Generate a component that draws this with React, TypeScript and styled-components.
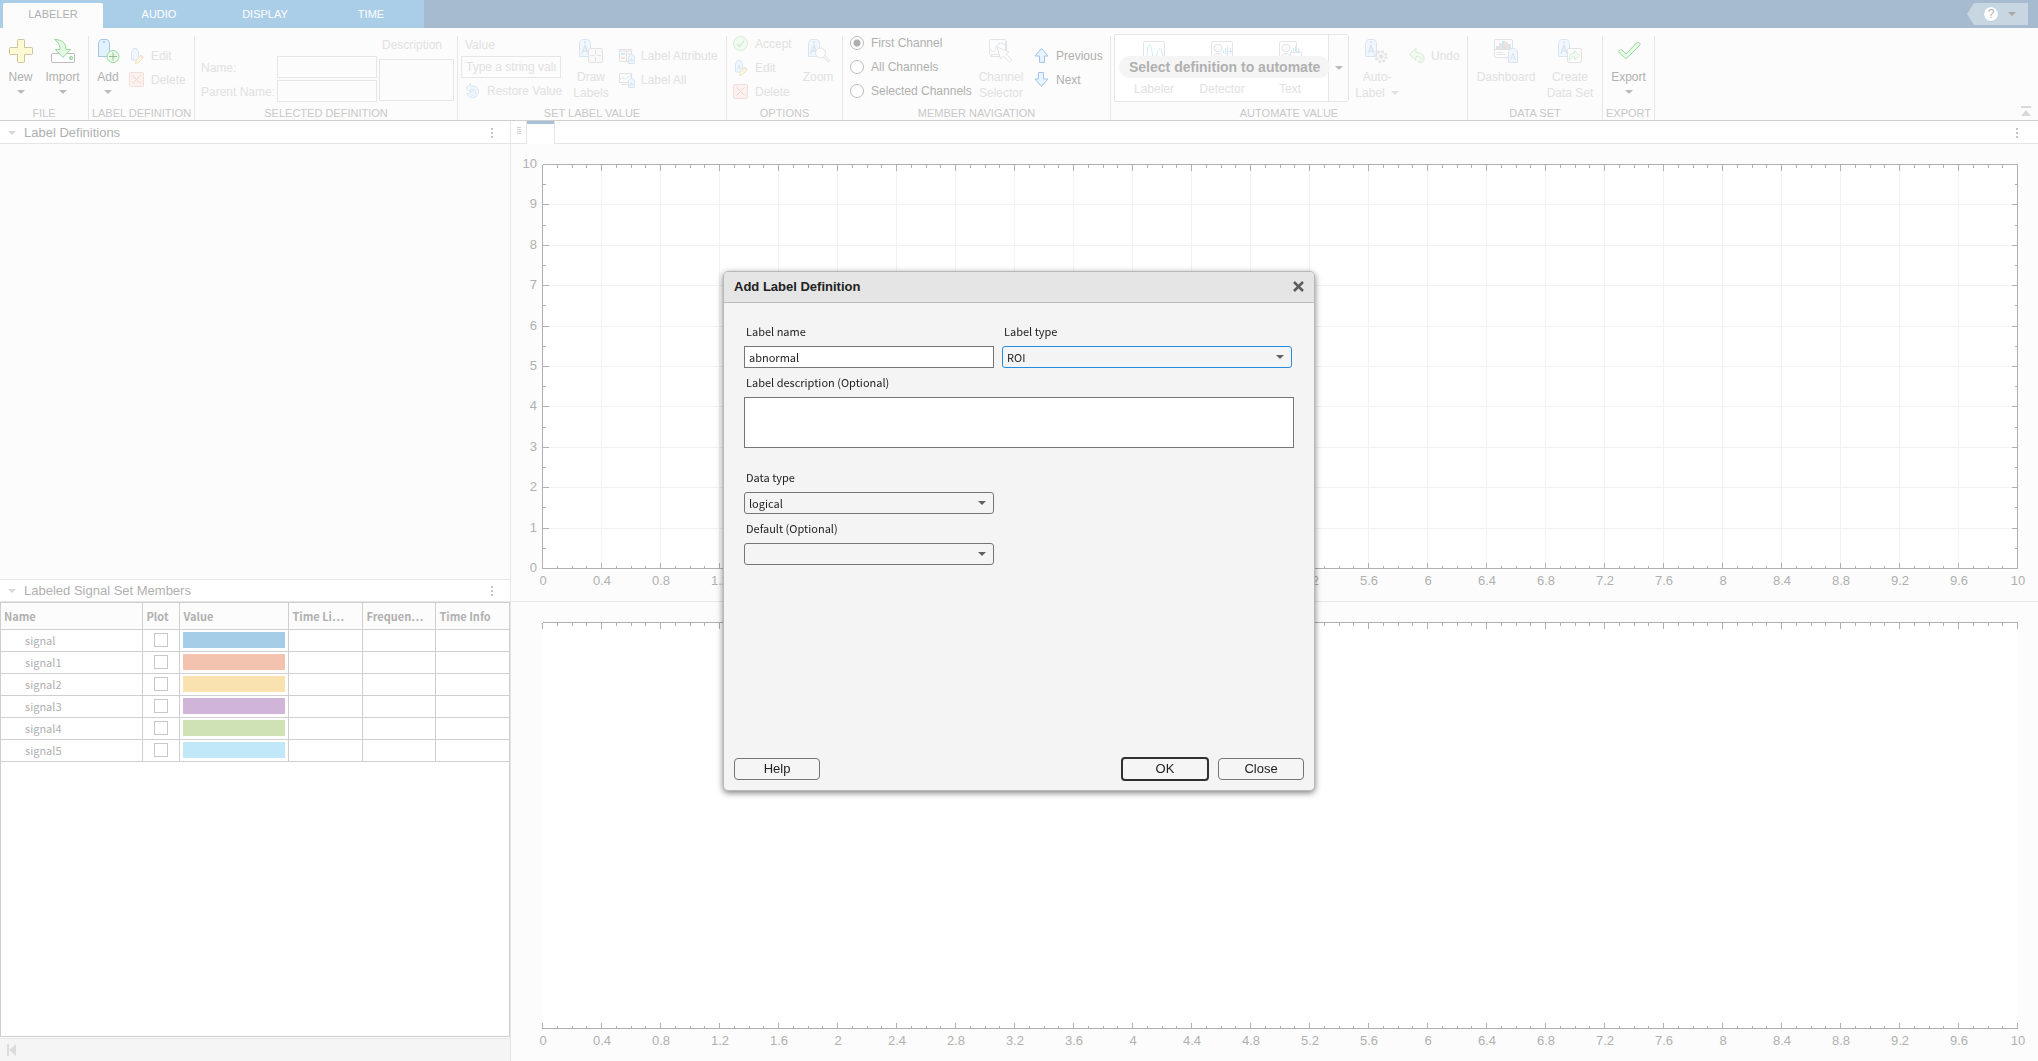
import React from "react";
import styled, { createGlobalStyle, css } from "styled-components";

const sans = `"Liberation Sans", Arial, sans-serif`;
const humanist = `"Noto Sans CJK SC", "Noto Sans", sans-serif`;

const color = {
  strip: "#fcfcfc",
  rule: "#e6e6e6",
  ruleDark: "#cfcfcf",
  text: "#b0b0b0",
  textOff: "#e1e1e1",
  caption: "#c8c8c8",
  axis: "#b0b0b0",
  grid: "#f2f2f2",
};

const GlobalStyle = createGlobalStyle`
  *, *::before, *::after { box-sizing: border-box; }
  body { margin: 0; font: 12px/16px ${sans}; color: ${color.text}; }
  button, input, select, textarea { font: inherit; color: inherit; margin: 0; padding: 0; border-radius: 0; }
  button { background: none; border: 0; }
  svg { display: block; flex: none; }
`;

const Page = styled.div`
  display: flex;
  flex-direction: column;
  height: 100vh;
  min-height: 620px;
  background: ${color.strip};
`;

/* ---------- tab bar ---------- */

const TabBar = styled.header`
  display: flex;
  justify-content: space-between;
  height: 28px;
  flex: none;
  background: #a6bad0;
`;

const TabList = styled.nav`
  display: flex;
  gap: 6px;
  padding: 3px 3px 0;
  background: #aacde8;
`;

const RibbonTab = styled.button<{ $active?: boolean }>`
  width: 100px;
  font-size: 11px;
  border-radius: 2px 2px 0 0;
  padding-bottom: 3px;
  color: ${(p) => (p.$active ? color.text : "#fff")};
  background: ${(p) => (p.$active ? color.strip : "transparent")};
`;

const QuickAccess = styled.div`
  display: flex;
  align-items: center;
  gap: 10px;
  width: 61px;
  height: 22px;
  margin: 3px 10px 0 0;
  padding-left: 17px;
  background: #c8d6e1;
  clip-path: polygon(7px 0, 100% 0, 100% 100%, 7px 100%, 0 50%);
`;

const HelpButton = styled.button`
  width: 14px;
  height: 14px;
  line-height: 14px;
  border-radius: 50%;
  background: #fff;
  box-shadow: 0 0 1px #8fc1ea;
`;

/* ---------- toolstrip ---------- */

const Strip = styled.div`
  display: flex;
  height: 93px;
  flex: none;
  padding-top: 3px;
  background: ${color.strip};
  border-bottom: 1px solid ${color.ruleDark};
`;

const Section = styled.section<{ $width: number }>`
  display: grid;
  grid-template-rows: 72px 17px;
  flex: 0 0 ${(p) => p.$width}px;
`;

const SectionBody = styled.div<{ $inset?: number; $gap?: number }>`
  display: flex;
  padding-left: ${(p) => p.$inset ?? 0}px;
  gap: ${(p) => p.$gap ?? 0}px;
`;

const SectionTitle = styled.h2`
  margin: 0;
  font-size: 11px;
  font-weight: 400;
  line-height: 20px;
  text-align: center;
  color: ${color.caption};
`;

const Divider = styled.div`
  width: 1px;
  flex: none;
  margin-top: 5px;
  background: ${color.rule};
`;

const BigButton = styled.button<{ $width: number }>`
  display: flex;
  flex-direction: column;
  align-items: center;
  width: ${(p) => p.$width}px;
  flex: none;
  height: 72px;
  padding-top: 8px;
  color: ${color.text};
  white-space: nowrap;
  &:disabled { color: ${color.textOff}; }
  > svg:first-child { margin-bottom: 6px; }
  > svg:last-child:not(:first-child) { margin-top: 5px; }
`;

const InlineLabel = styled.span`
  display: flex;
  align-items: center;
  gap: 6px;
`;

const Stack = styled.div<{ $inset?: number; $width?: number; $top?: boolean }>`
  display: flex;
  flex-direction: column;
  justify-content: ${(p) => (p.$top ? "flex-start" : "center")};
  flex: none;
  padding-top: ${(p) => (p.$top ? 12 : 0)}px;
  padding-left: ${(p) => p.$inset ?? 0}px;
  ${(p) => p.$width && css`width: ${p.$width}px;`}
`;

const SmallButton = styled.button`
  display: flex;
  align-items: center;
  gap: 6px;
  height: 24px;
  padding-top: 1px;
  white-space: nowrap;
  color: ${color.text};
  &:disabled { color: ${color.textOff}; }
`;

const RadioRow = styled.label`
  display: flex;
  align-items: center;
  gap: 7px;
  height: 24px;
  white-space: nowrap;
`;

const Radio = styled.input`
  appearance: none;
  width: 14px;
  height: 14px;
  border: 1px solid #bdbdbd;
  border-radius: 50%;
  background: #fff;
  &:checked { background: radial-gradient(circle, #aeaeae 3px, #fff 4px); }
`;

const FieldGrid = styled.div`
  display: grid;
  grid-template-columns: 76px 100px;
  grid-auto-rows: 24px;
  align-content: end;
  align-items: center;
  color: ${color.textOff};
  label { padding-top: 1px; }
`;

const StripInput = styled.input`
  width: 100px;
  height: 22px;
  padding: 0 4px;
  border: 1px solid ${color.rule};
  background: ${color.strip};
  color: ${color.textOff};
  &::placeholder { color: ${color.textOff}; opacity: 1; }
`;

const DescriptionField = styled.div`
  display: flex;
  flex-direction: column;
  gap: 6px;
  padding-top: 6px;
  color: ${color.textOff};
  label { padding-left: 3px; }
`;

const StripTextarea = styled.textarea`
  width: 75px;
  height: 42px;
  resize: none;
  border: 1px solid ${color.rule};
  background: ${color.strip};
`;

const ValueLabel = styled.label`
  height: 24px;
  line-height: 26px;
  padding-left: 4px;
  color: ${color.textOff};
`;

const Gallery = styled.div`
  position: relative;
  display: flex;
  width: 235px;
  height: 68px;
  flex: none;
  margin-top: 3px;
  border: 1px solid ${color.rule};
  border-radius: 0 3px 3px 0;
  background: #fff;
`;

const GalleryItems = styled.div`
  display: flex;
  flex: 1;
  padding-left: 5px;
`;

const GalleryItem = styled.button`
  display: flex;
  flex-direction: column;
  align-items: center;
  justify-content: space-between;
  width: 68px;
  padding: 6px 0 4px;
  &:disabled { color: ${color.textOff}; }
`;

const GalleryMore = styled.button`
  display: grid;
  place-items: center;
  width: 20px;
  border-left: 1px solid ${color.rule};
  border-radius: 0 3px 3px 0;
  background: ${color.strip};
`;

const GalleryHint = styled.div`
  position: absolute;
  top: 21px;
  left: 4px;
  padding: 0 10px;
  border-radius: 11px;
  background: #f5f5f5;
  font-size: 14px;
  font-weight: 700;
  line-height: 22px;
  white-space: nowrap;
`;

const Collapse = styled.button`
  align-self: flex-end;
  margin: 0 7px 4px auto;
`;

/* ---------- work area ---------- */

const Work = styled.main`
  display: grid;
  grid-template-columns: 511px minmax(0, 1fr);
  flex: 1;
  min-height: 0;
`;

const SideBar = styled.aside`
  display: grid;
  grid-template-rows: minmax(0, 458fr) minmax(0, 459fr) 23px;
  border-right: 1px solid ${color.rule};
`;

const Panel = styled.section<{ $ruled?: boolean }>`
  display: flex;
  flex-direction: column;
  ${(p) => p.$ruled && css`border-top: 1px solid ${color.rule};`}
`;

const PanelHeader = styled.header<{ $height: number }>`
  display: flex;
  align-items: center;
  gap: 8px;
  height: ${(p) => p.$height}px;
  flex: none;
  padding: 1px 16px 0 8px;
  border-bottom: 1px solid ${color.rule};
  background: #fff;
  h3 { flex: 1; margin: 0; font-size: 13px; font-weight: 400; }
`;

const TableFrame = styled.div`
  flex: 1;
  margin-bottom: 1px;
  border: 1px solid ${color.ruleDark};
  background: #fff;
`;

const SignalTable = styled.table`
  width: 100%;
  table-layout: fixed;
  border-collapse: collapse;
  font-family: ${humanist};
  font-size: 11px;
  th, td {
    height: 22px;
    padding: 0;
    border: solid ${color.ruleDark};
    border-width: 0 1px 1px 0;
    text-align: left;
    white-space: nowrap;
  }
  th { height: 26px; padding: 1px 0 0 4px; background: ${color.strip}; font-weight: 700; }
  th:first-child { padding-left: 3px; }
  th:last-child, td:last-child { border-right: 0; }
`;

const NameCell = styled.td`
  && { padding-left: 24px; }
`;

const PlotBox = styled.input`
  appearance: none;
  display: block;
  width: 14px;
  height: 14px;
  margin: 0 auto 0 11px;
  border: 1px solid ${color.caption};
  background: #fff;
`;

const Swatch = styled.div<{ $color: string }>`
  height: 16px;
  margin: 0 3px;
  background: ${(p) => p.$color};
`;

const StatusBar = styled.footer`
  display: flex;
  align-items: center;
  padding-left: 7px;
  border-top: 1px solid ${color.rule};
  background: #f5f5f5;
`;

const Documents = styled.div`
  display: grid;
  grid-template-rows: 23px minmax(0, 457fr) 1px minmax(0, 459fr);
`;

const DocTabs = styled.div`
  display: flex;
  background: #fff;
`;

const DocGrip = styled.div`
  width: 15px;
  padding: 6px 0 0 6px;
  border-bottom: 1px solid ${color.rule};
`;

const DocTab = styled.button`
  width: 29px;
  border: solid ${color.rule};
  border-width: 0 1px;
  background: linear-gradient(#a6c0d6 3px, #fff 3px);
`;

const DocTabsRest = styled.div`
  display: flex;
  flex: 1;
  justify-content: flex-end;
  align-items: center;
  padding: 1px 19px 0 0;
  border-bottom: 1px solid ${color.rule};
`;

const DocRule = styled.div`
  background: ${color.rule};
`;

const PlotArea = styled.div`
  display: flex;
  padding: 20px 21px 33px 31px;
`;

const Axes = styled.svg`
  flex: 1;
  width: 100%;
  height: 100%;
  min-width: 0;
  overflow: visible;
  font: 13px ${sans};
`;

/* ---------- dialog ---------- */

const Overlay = styled.div`
  position: fixed;
  inset: 0;
  display: flex;
  align-items: center;
  justify-content: center;
`;

const Dialog = styled.form`
  display: flex;
  flex-direction: column;
  width: 592px;
  height: 520px;
  border: 1px solid #b8b8b8;
  border-radius: 5px;
  background: #f4f4f4;
  box-shadow: 0 2px 6px rgba(0, 0, 0, 0.5);
  color: #212121;
`;

const DialogTitle = styled.header`
  display: flex;
  align-items: center;
  justify-content: space-between;
  height: 31px;
  padding: 0 10px;
  border-bottom: 1px solid #bbb;
  border-radius: 4px 4px 0 0;
  background: #e5e5e5;
  h1 { margin: 0; font-size: 13px; font-weight: 700; }
`;

const DialogBody = styled.div`
  display: grid;
  grid-template-columns: 250px 290px;
  column-gap: 8px;
  align-content: start;
  flex: 1;
  padding: 14px 20px 0;
  font-family: ${humanist};
  font-size: 11px;
`;

const Field = styled.div<{ $wide?: boolean; $spaced?: boolean }>`
  display: flex;
  flex-direction: column;
  ${(p) => p.$wide && css`grid-column: 1 / -1; margin-right: -2px;`}
  ${(p) => p.$spaced && css`margin-top: 15px;`}
  label { padding: 6px 0 7px 2px; line-height: 16px; }
`;

const TextInput = styled.input`
  height: 22px;
  padding: 0 4px;
  border: 1px solid #757575;
  background: #fff;
`;

const TextArea = styled.textarea`
  height: 51px;
  padding: 4px;
  border: 1px solid #757575;
  background: #fff;
  resize: none;
`;

const SelectBox = styled.div`
  display: grid;
  align-items: center;
  > * { grid-area: 1 / 1; }
  > svg { justify-self: end; margin-right: 8px; pointer-events: none; }
`;

const Select = styled.select<{ $focused?: boolean }>`
  appearance: none;
  width: 100%;
  height: 22px;
  padding: 0 4px;
  border: 1px solid ${(p) => (p.$focused ? "#268cdd" : "#757575")};
  border-radius: 3px;
  background: #f4f4f4;
  outline: none;
`;

const DialogActions = styled.footer`
  display: flex;
  align-items: center;
  gap: 9px;
  padding: 0 10px 9px;
`;

const DialogButton = styled.button<{ $primary?: boolean; $start?: boolean }>`
  width: ${(p) => (p.$primary ? 88 : 86)}px;
  height: ${(p) => (p.$primary ? 24 : 22)}px;
  margin-right: ${(p) => (p.$start ? "auto" : "0")};
  border: ${(p) => (p.$primary ? "2px solid #303030" : "1px solid #757575")};
  border-radius: 4px;
  background: #f5f5f5;
  font-size: 13px;
`;

/* ---------- drawings ---------- */

const Caret = ({ fill = "#bbb" }: { fill?: string }) => (
  <svg width="8" height="4" viewBox="0 0 8 4" aria-hidden>
    <path d="M0 0h8L4 4z" fill={fill} />
  </svg>
);

const Dots = () => (
  <svg width="4" height="12" viewBox="0 0 4 12" fill="#c4c4c4" aria-hidden>
    <path d="M1 1h2v2H1zM1 5h2v2H1zM1 9h2v2H1z" />
  </svg>
);

const Icon = ({ size = 24, faded, children }: { size?: number; faded?: boolean; children: React.ReactNode }) => (
  <svg width={size} height={size} viewBox={`0 0 ${size} ${size}`} fill="none" opacity={faded ? 0.4 : 1} aria-hidden>
    {children}
  </svg>
);

const Tag = ({ letter = true }: { letter?: boolean }) => (
  <g>
    <path d="M.5 5.500C.5 2.500 2 .5 3.500.5h5c1.500 0 3 2 3 5v12H.5z" fill="#e2f1fe" stroke="#a5c4e6" strokeLinejoin="round" />
    <circle cx="6" cy="3" r="1" fill="#a5c4e6" />
    {letter && <path d="M3 14.500 6 6.500l3 8M4.200 12h3.600" stroke="#a5c4e6" strokeWidth="1.500" />}
  </g>
);

const SmallTag = ({ x = 0, y = 0 }: { x?: number; y?: number }) => (
  <g transform={`translate(${x} ${y})`}>
    <path d="M.5 3 2 .5h3L6.500 3v6.500h-6z" fill="#e2f1fe" stroke="#a5c4e6" strokeLinejoin="round" />
    <path d="M2 8 3.500 4 5 8M2.600 6.500h1.800" stroke="#a5c4e6" />
  </g>
);

const NewIcon = () => (
  <Icon>
    <path d="M9.500.5h5a1 1 0 0 1 1 1v7h7a1 1 0 0 1 1 1v5a1 1 0 0 1-1 1h-7v7a1 1 0 0 1-1 1h-5a1 1 0 0 1-1-1v-7h-7a1 1 0 0 1-1-1v-5a1 1 0 0 1 1-1h7v-7a1 1 0 0 1 1-1z" fill="#fff9d4" stroke="#cdc4a0" />
  </Icon>
);

const ImportIcon = () => (
  <Icon>
    <rect x=".5" y="14.500" width="23" height="9" rx="1.500" fill="#fff" stroke="#bdbdbd" />
    <circle cx="20" cy="19" r="1.600" fill="#c4ecc8" stroke="#9bd4a1" />
    <path d="M3.500.5c7 0 11.500 3 11.500 10h4.500L12 18.500 4.500 10.500H9c0-4-1.500-7.500-5.500-10z" fill="#e2fae0" stroke="#9bd4a1" strokeLinejoin="round" />
  </Icon>
);

const AddIcon = () => (
  <Icon>
    <g transform="translate(2 0)">
      <Tag letter={false} />
    </g>
    <circle cx="17" cy="17.500" r="6" fill="#e6fbe4" stroke="#9bd4a1" />
    <path d="M17 13.500v8M13 17.500h8" stroke="#9fb8a2" />
  </Icon>
);

const Pencil = ({ x, y }: { x: number; y: number }) => (
  <g transform={`translate(${x} ${y})`}>
    <path d="M6 .5 8.500 3 3 8.500.5 9 1 6z" fill="#fff3c4" stroke="#dcc078" strokeLinejoin="round" />
    <path d="M6 .5 8.500 3 7.500 4 5 1.500z" fill="#f6b5a8" />
  </g>
);

const EditTagIcon = ({ letter }: { letter?: boolean }) => (
  <Icon size={16} faded>
    <path d="M2.500 4 4.500 .5h3L9.500 4v8h-7z" fill="#e2f1fe" stroke="#a5c4e6" strokeLinejoin="round" />
    {letter && <path d="M4.500 9.500 6 5l1.500 4.500M5 8h2" stroke="#a5c4e6" />}
    <Pencil x={6} y={6.5} />
  </Icon>
);

const DeleteIcon = () => (
  <Icon size={16} faded>
    <rect x=".5" y=".5" width="14" height="14" rx="1" fill="#fbe4df" stroke="#e8b3aa" />
    <path d="m3.500 3.500 8 8M11.500 3.500l-8 8" stroke="#d9a096" />
  </Icon>
);

const AcceptIcon = () => (
  <Icon size={16} faded>
    <circle cx="7.500" cy="7.500" r="7" fill="#e2fae0" stroke="#9bd4a1" />
    <path d="m4 8 2.500 2.500L11 5" stroke="#9bd4a1" strokeWidth="1.500" />
  </Icon>
);

const RestoreIcon = () => (
  <Icon size={16} faded>
    <path d="M5.500.5v3c5-1 8 1 8 5 0 3.500-2.500 6-6 6-3 0-5-1.500-5.500-4h3c.5 1 1.300 1.500 2.500 1.500 2 0 3-1.300 3-3.200 0-2-1.500-3-5-2.300v3L1 5z" fill="#e2f1fe" stroke="#a5c4e6" strokeLinejoin="round" />
    <circle cx="7.500" cy="8.500" r="1" stroke="#a5c4e6" />
  </Icon>
);

const DrawIcon = () => (
  <Icon faded>
    <Tag />
    <rect x="9.500" y="9.500" width="14" height="14" rx="1.500" fill="#f7f7f7" stroke="#c0c0c0" />
    <path d="M16.500 11.500v4M16.500 18v4M11.500 16.500h4M18 16.500h4" stroke="#bdbdbd" />
  </Icon>
);

const AttributeIcon = () => (
  <Icon size={16} faded>
    <path d="M.5 1.500h12v12H.5z" fill="#fff" stroke="#bdbdbd" />
    <path d="M.5 3h12M7.500 3v10M7.500 6h5" stroke="#bdbdbd" />
    <path d="M2 5h4v2H2z" fill="#8ec9ee" />
    <path d="M2 9h4v2H2z" fill="#f3b593" />
    <SmallTag x={9} y={6} />
  </Icon>
);

const LabelAllIcon = () => (
  <Icon size={16} faded>
    <path d="M2.500 12.500h10M.5 1.500h12v9H.5z" fill="#fff" stroke="#bdbdbd" />
    <path d="M.5 8C3 4 5 7 6.500 7S9 3 12.500 4" stroke="#8ec9ee" />
    <SmallTag x={9} y={6} />
  </Icon>
);

const ZoomIcon = () => (
  <Icon faded>
    <g transform="translate(2 0)">
      <Tag />
    </g>
    <path d="m17 18 5 5 2-1.500-5-5z" fill="#eee" stroke="#c0c0c0" />
    <circle cx="14.500" cy="14" r="5" fill="#fff" stroke="#c0c0c0" />
  </Icon>
);

const SelectorIcon = () => (
  <Icon faded>
    <path d="M2.500 16.500h-1v1h14M16.500 2.500h1v10" stroke="#c0c0c0" />
    <rect x=".5" y=".5" width="16" height="15" rx="1" fill="#fff" stroke="#c0c0c0" />
    <path d="M1 10c2 4 5 3 6-1s4-7 9-3" stroke="#8ec9ee" />
    <path d="m8 8 3.500 12 3-3 6 6 2.500-2-6-6 3-2z" fill="#fff" stroke="#c0c0c0" strokeLinejoin="round" />
  </Icon>
);

const ArrowIcon = ({ down }: { down?: boolean }) => (
  <Icon size={16}>
    <path
      d="M7.500 .5 14 8h-3.500v6.500h-5V8H1z"
      transform={down ? "rotate(180 7.500 7.500)" : undefined}
      fill="#e6f4ff"
      stroke="#a5c4e6"
      strokeLinejoin="round"
    />
  </Icon>
);

const PeakIcon = () => (
  <Icon faded>
    <rect x="1.500" y=".5" width="21" height="22" rx="1.500" fill="#fff" stroke="#c0c0c0" />
    <path d="M4.500 18C6 0 8.500 0 10.500 14c.5 2 1 4 2 4s1.500-2 2.500-5c2-7 4-8 6 3" stroke="#8ec9ee" />
  </Icon>
);

const SpeechIcon = ({ narrow }: { narrow?: boolean }) => (
  <Icon faded>
    <rect x="1.500" y=".5" width={narrow ? 17 : 21} height="22" rx="1.500" fill="#fff" stroke="#c0c0c0" />
    <circle cx="8" cy="7" r="4" fill="#f2f2f2" stroke="#c0c0c0" />
    <path d="M2 20c0-10 12-10 12 0" fill="#f2f2f2" stroke="#c0c0c0" />
    <path d="M13.500 9v3M15.500 7v6M17.500 5v11M20.500 7v6M18 10.500h4" stroke="#8ec9ee" />
    {narrow && <rect x="12.500" y="11.500" width="11" height="9" fill="#fff" stroke="#c0c0c0" />}
  </Icon>
);

const AutoIcon = () => (
  <Icon faded>
    <Tag />
    <circle cx="16" cy="17.500" r="5" fill="#f0f0f0" stroke="#bdbdbd" strokeWidth="3" strokeDasharray="2 1.900" />
    <circle cx="16" cy="17.500" r="4.500" fill="#f2f2f2" stroke="#c8c8c8" />
    <circle cx="16" cy="17.500" r="1.500" fill="#c8c8c8" stroke="#b5b5b5" />
  </Icon>
);

const UndoIcon = () => (
  <Icon size={16} faded>
    <path d="M7 .5v4c5 0 8 2 8 6 0 2.500-1.500 4-4 4-1 0-1.500-.5-1.500-1.500 2-.5 2.500-1 2.500-2 0-1.500-1.500-2.500-5-2.500v4L.5 6.500z" fill="#e2fae0" stroke="#9bd4a1" strokeLinejoin="round" />
  </Icon>
);

const DashboardIcon = () => (
  <Icon faded>
    <rect x=".5" y=".5" width="18" height="18" rx="1.500" fill="#fff" stroke="#bdbdbd" />
    <path d="M.5 10.500h18M3 13.500h6M3 15.500h8" stroke="#bdbdbd" />
    <path d="M2 7h3v3H2zM8 2h3v8H8zM14 5h3v5h-3z" fill="#8ec9ee" />
    <path d="M5 4h3v6H5zM11 3h3v7h-3z" fill="#f3b593" />
    <path d="M14.500 12.500 17 9.500h4l2.500 3v11h-9z" fill="#e2f1fe" stroke="#a5c4e6" strokeLinejoin="round" />
    <path d="m16.500 21 2.500-7 2.500 7M17.500 19h3" stroke="#a5c4e6" />
  </Icon>
);

const CreateIcon = () => (
  <Icon faded>
    <Tag />
    <rect x="9.500" y="9.500" width="14" height="14" rx="1.500" fill="#fff" stroke="#bdbdbd" />
    <path d="M11.500 21.500c-1-5 1-7.500 5-7.500v-2.500l5 5-5 4.500v-3c-2.500 0-3.500.5-5 3.500z" fill="#e2fae0" stroke="#9bd4a1" strokeLinejoin="round" />
  </Icon>
);

const ExportIcon = () => (
  <Icon>
    <path d="M2 12c1-1.500 2.500-1.500 3.500-.5L9 15 19.500 4c2-1.500 4.500 0 3 2.500l-12 12c-1 1-2 1-3 0l-5-4.500c-.6-.6-.9-1.300-.5-2z" fill="#e6fbe4" stroke="#9bd4a1" strokeLinejoin="round" />
  </Icon>
);

/* ---------- plots ---------- */

const X_DIVISIONS = 25;
const MINOR_PER_MAJOR = 4;

function Plot({ withY }: { withY?: boolean }) {
  const xTicks = Array.from({ length: X_DIVISIONS * MINOR_PER_MAJOR + 1 }, (_, i) => i);
  const yTicks = Array.from({ length: 21 }, (_, i) => i);
  const inner = (n: number, last: number) => n > 0 && n < last;
  return (
    <Axes role="img" aria-label={withY ? "Signal plot" : "Label plot"}>
      <rect width="100%" height="100%" fill="#fff" />
      <g shapeRendering="crispEdges" stroke={color.axis} transform="translate(.5 .5)">
        {withY && (
          <g stroke={color.grid}>
            {xTicks.filter((i) => i % 4 === 0 && inner(i, 100)).map((i) => (
              <line key={i} x1={`${i}%`} x2={`${i}%`} y1="0" y2="100%" />
            ))}
            {yTicks.filter((i) => i % 2 === 0 && inner(i, 20)).map((i) => (
              <line key={i} y1={`${i * 5}%`} y2={`${i * 5}%`} x1="0" x2="100%" />
            ))}
          </g>
        )}
        {xTicks.map((i) => {
          const length = i % MINOR_PER_MAJOR === 0 ? 6 : 3;
          return (
            <React.Fragment key={i}>
              <line x1={`${i}%`} x2={`${i}%`} y1="0" y2={length} />
              <svg y="100%" overflow="visible">
                <line x1={`${i}%`} x2={`${i}%`} y1={-length} y2="0" />
              </svg>
            </React.Fragment>
          );
        })}
        <line x1="0" x2="100%" y1="0" y2="0" />
        <line x1="0" x2="100%" y1="100%" y2="100%" />
        {withY && (
          <>
            <line x1="0" x2="0" y1="0" y2="100%" />
            <line x1="100%" x2="100%" y1="0" y2="100%" />
            {yTicks.map((i) => {
              const length = i % 2 === 0 ? 6 : 3;
              return (
                <React.Fragment key={i}>
                  <line x1="0" x2={length} y1={`${i * 5}%`} y2={`${i * 5}%`} />
                  <svg x="100%" overflow="visible">
                    <line x1={-length} x2="0" y1={`${i * 5}%`} y2={`${i * 5}%`} />
                  </svg>
                </React.Fragment>
              );
            })}
          </>
        )}
      </g>
      <g fill={color.text}>
        {Array.from({ length: X_DIVISIONS + 1 }, (_, i) => (
          <text key={i} x={`${i * 4}%`} y="100%" dx="1" dy="17" textAnchor="middle">
            {Number((i * 0.4).toFixed(1))}
          </text>
        ))}
        {withY &&
          Array.from({ length: 11 }, (_, i) => (
            <text key={i} x="-5" y={`${100 - i * 10}%`} dy="4" textAnchor="end">
              {i}
            </text>
          ))}
      </g>
    </Axes>
  );
}

const signals = [
  { name: "signal", color: "#a6cde8" },
  { name: "signal1", color: "#f3c3b0" },
  { name: "signal2", color: "#f9e2b0" },
  { name: "signal3", color: "#d1b5d8" },
  { name: "signal4", color: "#cfe2b6" },
  { name: "signal5", color: "#c0e8f9" },
];

function Toolstrip() {
  return (
    <Strip>
      <Section $width={88}>
        <SectionBody>
          <BigButton $width={41}><NewIcon />New<Caret /></BigButton>
          <BigButton $width={43}><ImportIcon />Import<Caret /></BigButton>
        </SectionBody>
        <SectionTitle>FILE</SectionTitle>
      </Section>
      <Divider />
      <Section $width={105}>
        <SectionBody>
          <BigButton $width={38}><AddIcon />Add<Caret /></BigButton>
          <Stack $inset={2}>
            <SmallButton disabled><EditTagIcon />Edit</SmallButton>
            <SmallButton disabled><DeleteIcon />Delete</SmallButton>
          </Stack>
        </SectionBody>
        <SectionTitle>LABEL DEFINITION</SectionTitle>
      </Section>
      <Divider />
      <Section $width={262}>
        <SectionBody $inset={6} $gap={2}>
          <FieldGrid>
            <label htmlFor="sel-name">Name:</label>
            <StripInput id="sel-name" disabled />
            <label htmlFor="sel-parent">Parent Name:</label>
            <StripInput id="sel-parent" disabled />
          </FieldGrid>
          <DescriptionField>
            <label htmlFor="sel-desc">Description</label>
            <StripTextarea id="sel-desc" disabled />
          </DescriptionField>
        </SectionBody>
        <SectionTitle>SELECTED DEFINITION</SectionTitle>
      </Section>
      <Divider />
      <Section $width={268}>
        <SectionBody $inset={3}>
          <Stack $width={108}>
            <ValueLabel htmlFor="value">Value</ValueLabel>
            <StripInput id="value" placeholder="Type a string value" disabled />
            <Stack $inset={4}>
              <SmallButton disabled><RestoreIcon />Restore Value</SmallButton>
            </Stack>
          </Stack>
          <BigButton $width={44} disabled><DrawIcon /><span>Draw<br />Labels</span></BigButton>
          <Stack $inset={6}>
            <SmallButton disabled><AttributeIcon />Label Attribute</SmallButton>
            <SmallButton disabled><LabelAllIcon />Label All</SmallButton>
          </Stack>
        </SectionBody>
        <SectionTitle>SET LABEL VALUE</SectionTitle>
      </Section>
      <Divider />
      <Section $width={115}>
        <SectionBody $inset={6}>
          <Stack $width={65}>
            <SmallButton disabled><AcceptIcon />Accept</SmallButton>
            <SmallButton disabled><EditTagIcon letter />Edit</SmallButton>
            <SmallButton disabled><DeleteIcon />Delete</SmallButton>
          </Stack>
          <BigButton $width={40} disabled><ZoomIcon /><span>Zoom</span></BigButton>
        </SectionBody>
        <SectionTitle>OPTIONS</SectionTitle>
      </Section>
      <Divider />
      <Section $width={267}>
        <SectionBody $inset={7}>
          <Stack $width={124}>
            <RadioRow><Radio type="radio" name="channels" defaultChecked />First Channel</RadioRow>
            <RadioRow><Radio type="radio" name="channels" />All Channels</RadioRow>
            <RadioRow><Radio type="radio" name="channels" />Selected Channels</RadioRow>
          </Stack>
          <BigButton $width={54} disabled><SelectorIcon /><span>Channel<br />Selector</span></BigButton>
          <Stack $inset={6}>
            <SmallButton><ArrowIcon />Previous</SmallButton>
            <SmallButton><ArrowIcon down />Next</SmallButton>
          </Stack>
        </SectionBody>
        <SectionTitle>MEMBER NAVIGATION</SectionTitle>
      </Section>
      <Divider />
      <Section $width={356}>
        <SectionBody $inset={3}>
          <Gallery>
            <GalleryItems>
              <GalleryItem disabled><PeakIcon />Labeler</GalleryItem>
              <GalleryItem disabled><SpeechIcon />Detector</GalleryItem>
              <GalleryItem disabled><SpeechIcon narrow />Text</GalleryItem>
            </GalleryItems>
            <GalleryMore aria-label="More automation"><Caret /></GalleryMore>
            <GalleryHint>Select definition to automate</GalleryHint>
          </Gallery>
          <BigButton $width={56} disabled>
            <AutoIcon />
            Auto-
            <InlineLabel>Label<Caret fill="#e1e1e1" /></InlineLabel>
          </BigButton>
          <Stack $inset={4} $top>
            <SmallButton disabled><UndoIcon />Undo</SmallButton>
          </Stack>
        </SectionBody>
        <SectionTitle>AUTOMATE VALUE</SectionTitle>
      </Section>
      <Divider />
      <Section $width={134}>
        <SectionBody $inset={6}>
          <BigButton $width={64} disabled><DashboardIcon /><span>Dashboard</span></BigButton>
          <BigButton $width={64} disabled><CreateIcon /><span>Create<br />Data Set</span></BigButton>
        </SectionBody>
        <SectionTitle>DATA SET</SectionTitle>
      </Section>
      <Divider />
      <Section $width={51}>
        <SectionBody>
          <BigButton $width={51}><ExportIcon />Export<Caret /></BigButton>
        </SectionBody>
        <SectionTitle>EXPORT</SectionTitle>
      </Section>
      <Divider />
      <Collapse aria-label="Collapse toolstrip">
        <svg width="10" height="10" viewBox="0 0 10 10" fill="#d9d9d9" aria-hidden>
          <path d="M0 0h10v2H0zM5 4l5 6H0z" />
        </svg>
      </Collapse>
    </Strip>
  );
}

function AddLabelDialog() {
  return (
    <Overlay>
      <Dialog role="dialog" aria-labelledby="dialog-title" onSubmit={(e) => e.preventDefault()}>
        <DialogTitle>
          <h1 id="dialog-title">Add Label Definition</h1>
          <button type="button" aria-label="Close dialog">
            <svg width="11" height="11" viewBox="0 0 11 11" stroke="#5c5c5c" strokeWidth="2.500" aria-hidden>
              <path d="m1 1 9 9M10 1l-9 9" />
            </svg>
          </button>
        </DialogTitle>
        <DialogBody>
          <Field>
            <label htmlFor="label-name">Label name</label>
            <TextInput id="label-name" defaultValue="abnormal" />
          </Field>
          <Field>
            <label htmlFor="label-type">Label type</label>
            <SelectBox>
              <Select id="label-type" $focused><option>ROI</option></Select>
              <Caret fill="#616161" />
            </SelectBox>
          </Field>
          <Field $wide>
            <label htmlFor="label-desc">Label description (Optional)</label>
            <TextArea id="label-desc" />
          </Field>
          <Field $spaced>
            <label htmlFor="data-type">Data type</label>
            <SelectBox>
              <Select id="data-type"><option>logical</option></Select>
              <Caret fill="#616161" />
            </SelectBox>
          </Field>
          <div />
          <Field>
            <label htmlFor="default-value">Default (Optional)</label>
            <SelectBox>
              <Select id="default-value"><option value="" /></Select>
              <Caret fill="#616161" />
            </SelectBox>
          </Field>
        </DialogBody>
        <DialogActions>
          <DialogButton type="button" $start>Help</DialogButton>
          <DialogButton type="submit" $primary>OK</DialogButton>
          <DialogButton type="button">Close</DialogButton>
        </DialogActions>
      </Dialog>
    </Overlay>
  );
}

export default function App() {
  return (
    <>
      <GlobalStyle />
      <Page>
        <TabBar>
          <TabList>
            <RibbonTab $active>LABELER</RibbonTab>
            <RibbonTab>AUDIO</RibbonTab>
            <RibbonTab>DISPLAY</RibbonTab>
            <RibbonTab>TIME</RibbonTab>
          </TabList>
          <QuickAccess>
            <HelpButton>?</HelpButton>
            <Caret fill="#a8a8a8" />
          </QuickAccess>
        </TabBar>
        <Toolstrip />
        <Work>
          <SideBar>
            <Panel>
              <PanelHeader $height={23}>
                <Caret fill="#d8d8d8" />
                <h3>Label Definitions</h3>
                <Dots />
              </PanelHeader>
            </Panel>
            <Panel $ruled>
              <PanelHeader $height={22}>
                <Caret fill="#d8d8d8" />
                <h3>Labeled Signal Set Members</h3>
                <Dots />
              </PanelHeader>
              <TableFrame>
                <SignalTable>
                  <colgroup>
                    <col width="141" />
                    <col width="37" />
                    <col width="109" />
                    <col width="74" />
                    <col width="73" />
                    <col />
                  </colgroup>
                  <thead>
                    <tr>
                      <th>Name</th>
                      <th>Plot</th>
                      <th>Value</th>
                      <th>Time Li…</th>
                      <th>Frequen…</th>
                      <th>Time Info</th>
                    </tr>
                  </thead>
                  <tbody>
                    {signals.map((s) => (
                      <tr key={s.name}>
                        <NameCell>{s.name}</NameCell>
                        <td><PlotBox type="checkbox" aria-label={`Plot ${s.name}`} /></td>
                        <td><Swatch $color={s.color} /></td>
                        <td />
                        <td />
                        <td />
                      </tr>
                    ))}
                  </tbody>
                </SignalTable>
              </TableFrame>
            </Panel>
            <StatusBar>
              <svg width="9" height="12" viewBox="0 0 9 12" fill="#dcdcdc" aria-hidden>
                <path d="M0 0h2v12H0zM9 0v12L2 6z" />
              </svg>
            </StatusBar>
          </SideBar>
          <Documents>
            <DocTabs>
              <DocGrip>
                <svg width="4" height="8" viewBox="0 0 4 8" fill="#d0d0d0" aria-hidden>
                  <path d="M0 0h4v1H0zM0 2h4v1H0zM0 4h4v1H0zM0 6h4v1H0z" />
                </svg>
              </DocGrip>
              <DocTab aria-label="Document" />
              <DocTabsRest><Dots /></DocTabsRest>
            </DocTabs>
            <PlotArea><Plot withY /></PlotArea>
            <DocRule />
            <PlotArea><Plot /></PlotArea>
          </Documents>
        </Work>
      </Page>
      <AddLabelDialog />
    </>
  );
}
